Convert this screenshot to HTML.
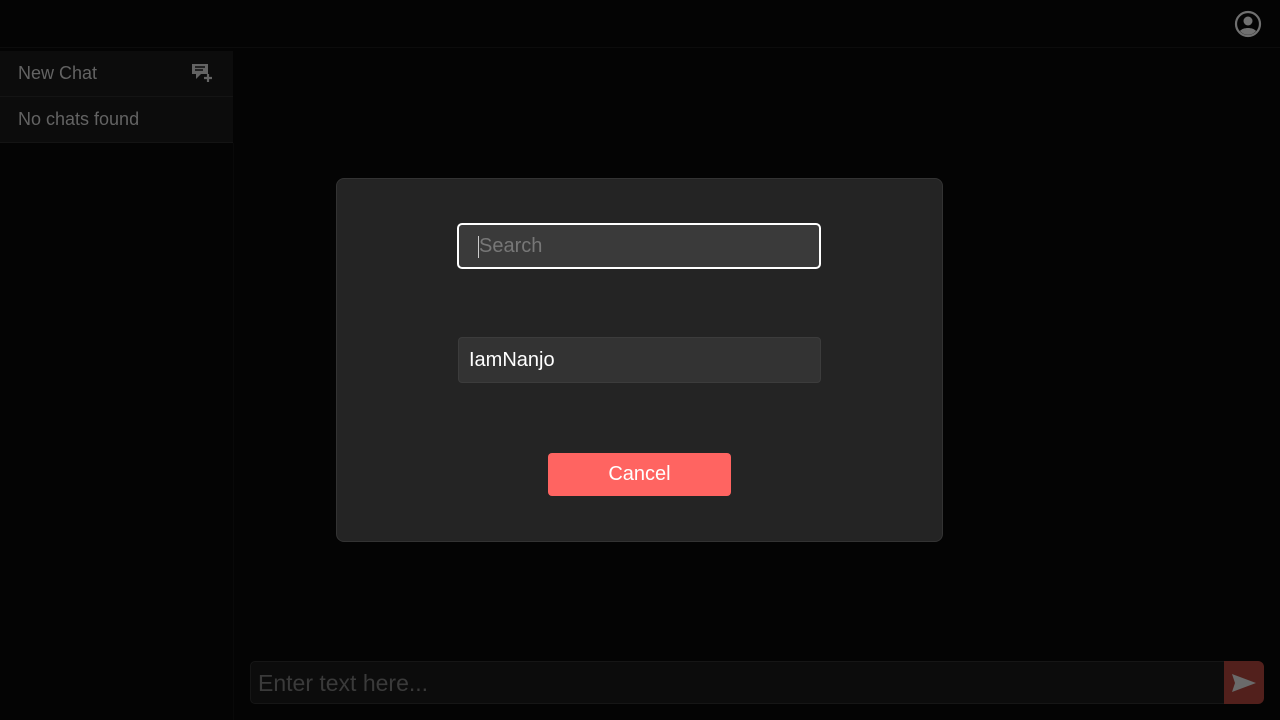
<!DOCTYPE html>
<html><head><style>
body{margin:0;width:1280px;height:720px;background:#040404;font-family:"Liberation Sans",sans-serif;position:relative;overflow:hidden}
.top{position:absolute;left:0;top:0;width:1280px;height:47px;border-bottom:1px solid #0c0c0c}
.side{position:absolute;left:0;top:51px;width:233px;height:92px;background:#0c0c0c}
.side div{height:45px;line-height:45px;padding-left:18px;color:#636363;font-size:18px;border-bottom:1px solid #141414}
.vline{position:absolute;left:233px;top:143px;width:1px;height:577px;background:#090909}
.modal{position:absolute;left:336px;top:178px;width:605px;height:362px;background:#242424;border:1px solid #333;border-radius:8px}
.search{position:absolute;left:120px;top:44px;width:360px;height:42px;border:2px solid #fff;border-radius:5px;background:#3a3a3a;color:#777;font-size:20px;line-height:42px;box-sizing:content-box}
.item{position:absolute;left:121px;top:158px;width:363px;height:46px;background:#333;border:1px solid #3c3c3c;border-radius:4px;color:#fff;font-size:20px;line-height:44px;padding-left:10px;box-sizing:border-box}
.cancel{position:absolute;left:211px;top:274px;width:183px;height:43px;background:#ff6461;border-radius:4px;color:#fff;font-size:20px;text-align:center;line-height:43px}
.input{position:absolute;left:250px;top:661px;width:975px;height:43px;background:#0c0c0c;border:1px solid #161616;border-radius:5px 0 0 5px;box-sizing:border-box;color:#3a3a3a;font-size:23px;line-height:42px;padding-left:7px}
.send{position:absolute;left:1224px;top:661px;width:40px;height:43px;background:#52201c;border-radius:0 6px 6px 0}
</style></head><body>
<div class="top"></div>
<svg style="position:absolute;left:1234px;top:10px" width="28" height="28" viewBox="0 0 28 28"><circle cx="14" cy="14" r="12" fill="none" stroke="#707070" stroke-width="2.2"/><circle cx="14" cy="11" r="4.5" fill="#707070"/><path d="M6 21c3-4 13-4 16 0c-4 5-12 5-16 0z" fill="#707070"/></svg>
<div class="side"><div>New Chat</div><div>No chats found</div></div>
<svg style="position:absolute;left:191px;top:63px" width="22" height="20" viewBox="0 0 22 20"><path d="M1 1h16v10h-7l-5 5v-5H1z" fill="#636363"/><path d="M4 4h10M4 7h8" stroke="#0c0c0c" stroke-width="1.5"/><path d="M17 11v8M13 15h8" stroke="#636363" stroke-width="2.2"/></svg>
<div class="vline"></div>
<div class="modal">
<div class="search"><span style="display:inline-block;width:1px;height:22px;background:#ccc;vertical-align:middle;margin-left:19px"></span>Search</div>
<div class="item">IamNanjo</div>
<div class="cancel">Cancel</div>
</div>
<div class="input">Enter text here...</div>
<div class="send"><svg style="position:absolute;left:7px;top:11px" width="26" height="22" viewBox="0 0 26 22"><path d="M1 2l24 9L1 20l3-9z" fill="#6a6a6a"/></svg></div>
</body></html>
